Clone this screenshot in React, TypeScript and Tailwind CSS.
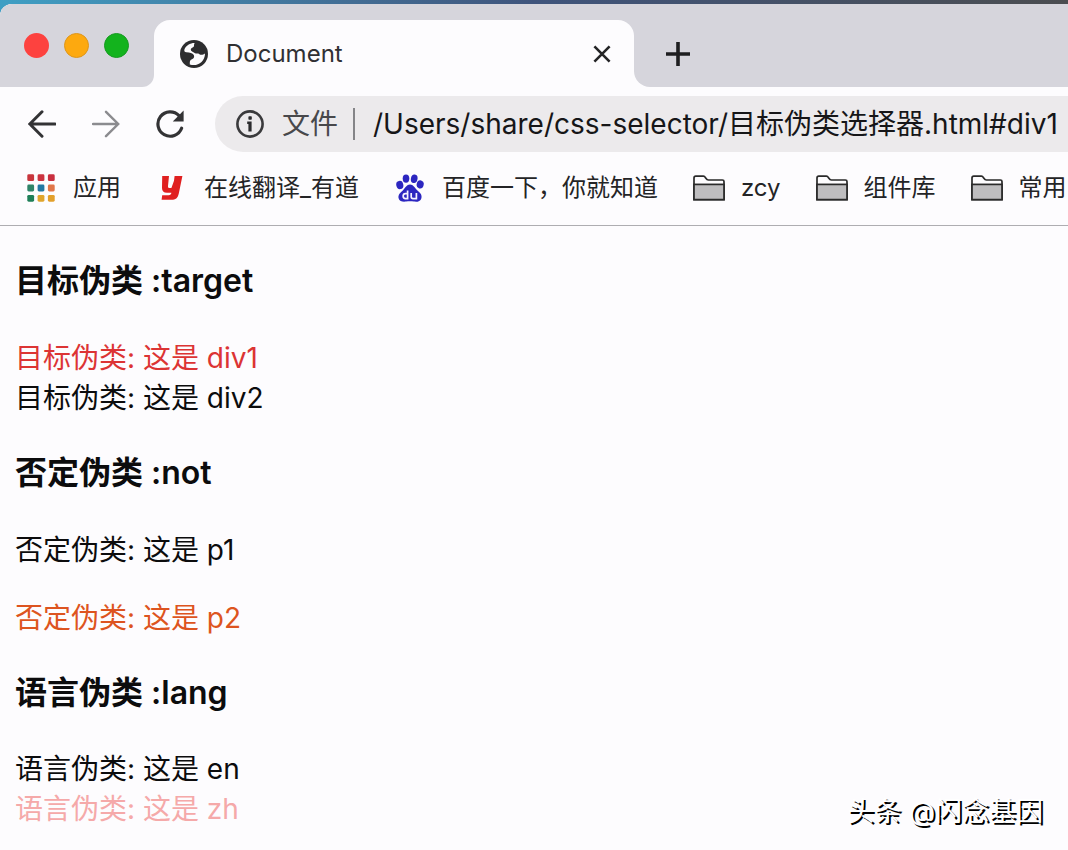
import React from "react";

function GlobeIcon() {
  return (
    <svg viewBox="0 0 28 28" className="size-7 shrink-0" aria-hidden="true">
      <circle cx="14" cy="14" r="14" fill="#2d2d2f" />
      <path
        d="M14.6 3C10 3 6 5.6 4.4 9.4C4 11 4.6 12 6.4 12.2C10 12.4 12.6 13 13.8 15C14.6 16.8 14 18.6 12 19.2C10.4 19.7 9.8 21 9.8 22.4L9.8 24.4C17 27 25 22 25 13.4C23.4 14.6 21 15.2 19.4 14.2C17.6 13 16.6 14 15 13.2C12.8 12 10.8 11.6 10.8 9.6C10.8 7.6 13.8 7.6 14 6C14 5 14 4 14.6 3Z"
        fill="#fdfcfe"
      />
    </svg>
  );
}

function BackIcon() {
  return (
    <svg viewBox="0 0 28 28" className="size-7" fill="none" stroke="#333335" strokeWidth="3" strokeLinecap="round" aria-hidden="true">
      <path d="M27 14H2M14 1.8L1.8 14L14 26.2" />
    </svg>
  );
}

function ForwardIcon() {
  return (
    <svg viewBox="0 0 28 28" className="size-7" fill="none" stroke="#8b8b8f" strokeWidth="2.4" strokeLinecap="round" aria-hidden="true">
      <path d="M1 14H26M14 1.8L26.2 14L14 26.2" />
    </svg>
  );
}

function ReloadIcon() {
  return (
    <svg viewBox="0 0 28 28" className="size-7" fill="none" aria-hidden="true">
      <path d="M25.6 18.2A12.2 12.2 0 1 1 23 5.6" stroke="#333335" strokeWidth="3.2" strokeLinecap="round" />
      <path d="M27.6 0.6V11.4H16.8Z" fill="#333335" />
    </svg>
  );
}

function InfoIcon() {
  return (
    <svg viewBox="0 0 28 28" className="size-7" fill="none" aria-hidden="true">
      <circle cx="14" cy="14" r="12.6" stroke="#3a3a3c" strokeWidth="2.6" />
      <rect x="12.4" y="6.2" width="3.4" height="3.6" rx="0.8" fill="#2b2b2d" />
      <path d="M11.2 11.6H15.6V21.6H12.4V14H11.2Z" fill="#2b2b2d" />
    </svg>
  );
}

function AppsIcon() {
  const dots = ["#c8353c", "#cc3340", "#c92f3f", "#2f8468", "#2378a3", "#e0764a", "#1f7f58", "#e0a52c", "#e2a02c"];
  return (
    <svg viewBox="0 0 28 28" className="size-7" aria-hidden="true">
      {dots.map((fill, i) => (
        <rect key={i} x={(i % 3) * 10.3 + 0.3} y={Math.floor(i / 3) * 10.3 + 0.3} width="6.8" height="6.8" rx="1.4" fill={fill} />
      ))}
    </svg>
  );
}

function YoudaoIcon() {
  return (
    <svg viewBox="0 0 28 28" className="size-7" aria-hidden="true">
      <path
        d="M4.2 2H11L10 12C9.9 13.4 10.4 14 11.6 14H13.4L16 6.8L16.6 2H24.4L20.8 19.4C19.8 24 17.6 25.8 13.4 25.8H3.6L4.2 21.2H10.6C12.4 21.2 13.2 20.4 13.4 18.8H9C5.6 18.8 4 17.2 4 14Z"
        fill="#e02020"
      />
    </svg>
  );
}

function PawIcon() {
  return (
    <svg viewBox="0 0 28 28" className="size-7" aria-hidden="true">
      <g fill="#2c26c0">
        <ellipse cx="3.8" cy="11" rx="3.5" ry="4.2" transform="rotate(-12 3.8 11)" />
        <ellipse cx="10" cy="4.6" rx="3.3" ry="4.2" />
        <ellipse cx="18.2" cy="4.8" rx="3.3" ry="4.3" transform="rotate(10 18.2 4.8)" />
        <ellipse cx="24.2" cy="10.4" rx="3.5" ry="4.1" transform="rotate(14 24.2 10.4)" />
        <path d="M14 10.6C17.4 10.6 18.6 14 21.2 16.2C24 18.6 26.4 20.8 25.4 24.2C24.4 27.8 20.8 28 18 27.6C15.2 27.2 12.8 27.2 10 27.6C7 28 3.4 27.6 2.6 24.2C1.8 20.8 4.4 18.6 7 16.2C9.4 14 10.6 10.6 14 10.6Z" />
      </g>
      <g fill="none" stroke="#f4f2ff" strokeWidth="1.7">
        <path d="M11.6 16.4V24.6H9.4C6.4 24.6 6.4 19.6 9.4 19.6H11.6" />
        <path d="M15.2 19V22.8C15.2 24 15.8 24.6 17 24.6H20.4V19" />
      </g>
    </svg>
  );
}

function FolderIcon() {
  return (
    <svg viewBox="0 0 32 26" className="h-[26px] w-8" aria-hidden="true">
      <path d="M1 24.6V3C1 1.8 1.6 1.2 2.8 1.2H10.4C12.8 1.2 12.6 5 15.4 5H29.4C30.4 5 31 5.6 31 6.6V24.6Z" fill="#fdfcfe" stroke="#2a2a2a" strokeWidth="1.7" />
      <rect x="1" y="9.4" width="30" height="15.2" fill="#bebdbf" stroke="#2a2a2a" strokeWidth="1.7" />
    </svg>
  );
}

const bookmarks = [
  { label: "应用", icon: <AppsIcon /> },
  { label: "在线翻译_有道", icon: <YoudaoIcon /> },
  { label: "百度一下，你就知道", icon: <PawIcon /> },
  { label: "zcy", icon: <FolderIcon /> },
  { label: "组件库", icon: <FolderIcon /> },
  { label: "常用", icon: <FolderIcon /> },
];

function TabStrip() {
  return (
    <div className="flex h-[83px] items-end rounded-tl-xl bg-[#d6d5dc]">
      <div className="flex h-full w-[154px] shrink-0 rounded-tl-xl bg-[#fdfcfe]">
        <div className="flex grow items-center gap-[15px] rounded-tl-xl rounded-br-xl bg-[#d6d5dc] pl-6">
          <button aria-label="关闭窗口" className="size-[25px] rounded-full bg-[#fd423f]" />
          <button aria-label="最小化" className="size-[25px] rounded-full border border-[#dd961c] bg-[#fda90f]" />
          <button aria-label="全屏" className="size-[25px] rounded-full border border-[#179a22] bg-[#13b31d]" />
        </div>
      </div>
      <div className="flex h-full w-[480px] shrink-0 items-end bg-[#d6d5dc]">
        <div className="flex h-[67px] w-full items-center rounded-t-2xl bg-[#fdfcfe] pr-[23px] pl-[26px]">
          <GlobeIcon />
          <span className="ml-[18px] grow text-2xl text-[#303033]">Document</span>
          <button aria-label="关闭标签页" className="p-0">
            <svg viewBox="0 0 18 18" className="size-[18px]" fill="none" stroke="#242426" strokeWidth="2.6" aria-hidden="true">
              <path d="M1.4 1.4L16.6 16.6M16.6 1.4L1.4 16.6" />
            </svg>
          </button>
        </div>
      </div>
      <div className="h-full grow bg-[#fdfcfe]">
        <div className="flex h-full items-center rounded-bl-2xl bg-[#d6d5dc] pt-4 pl-8">
          <button aria-label="新标签页">
            <svg viewBox="0 0 24 24" className="size-6" fill="none" stroke="#1e1e20" strokeWidth="3.6" aria-hidden="true">
              <path d="M12 0V24M0 12H24" />
            </svg>
          </button>
        </div>
      </div>
    </div>
  );
}

function Toolbar() {
  return (
    <div className="flex h-[73px] items-center pl-7">
      <div className="flex shrink-0 items-center gap-9">
        <button aria-label="后退"><BackIcon /></button>
        <button aria-label="前进"><ForwardIcon /></button>
        <button aria-label="重新加载"><ReloadIcon /></button>
      </div>
      <div className="ml-[31px] flex h-14 min-w-0 grow items-center rounded-l-full bg-[#eceaec] pl-[21px] text-[28px]">
        <InfoIcon />
        <span className="ml-[18px] shrink-0 text-[#48484b]">文件</span>
        <span className="ml-[15px] h-8 w-0.5 shrink-0 bg-[#858588]" />
        <input
          aria-label="地址"
          defaultValue="/Users/share/css-selector/目标伪类选择器.html#div1"
          className="ml-[18px] min-w-0 grow bg-transparent text-[#161618] outline-none"
        />
      </div>
    </div>
  );
}

function BookmarksBar() {
  return (
    <nav aria-label="书签栏" className="flex h-[66px] items-start gap-[35px] overflow-hidden border-b border-[#aeadb1] pt-2.5 pl-[25px]">
      {bookmarks.map((b) => (
        <a key={b.label} href="#" className="flex h-9 shrink-0 items-center gap-4 text-2xl text-[#242426]">
          <span className="flex w-8 justify-center">{b.icon}</span>
          {b.label}
        </a>
      ))}
    </nav>
  );
}

export default function App() {
  return (
    <div className="relative flex min-h-screen flex-col overflow-hidden bg-[#fdfcfe] font-[Inter,'Noto_Sans_CJK_SC',sans-serif]">
      <div className="bg-linear-to-r from-[#3f9fc4] via-[#3f547c] to-[#4b4d50]">
        <div className="h-1" />
        <TabStrip />
      </div>
      <Toolbar />
      <BookmarksBar />
      <main className="px-[15px] pt-[35px] text-[28px] leading-10 text-[#0c0c0d]">
        <h3 className="mb-[37px] text-[32px] font-semibold">目标伪类 :target</h3>
        <div className="text-[#dc3434]">目标伪类: 这是 div1</div>
        <div>目标伪类: 这是 div2</div>
        <h3 className="mt-[35px] mb-[37px] text-[32px] font-semibold">否定伪类 :not</h3>
        <p className="mb-7">否定伪类: 这是 p1</p>
        <p className="text-[#dd5420]">否定伪类: 这是 p2</p>
        <h3 className="mt-[35px] mb-9 text-[32px] font-semibold">语言伪类 :lang</h3>
        <div>语言伪类: 这是 en</div>
        <div className="text-[#f5a9a9]">语言伪类: 这是 zh</div>
      </main>
      <div className="absolute right-[25px] bottom-[18px] text-[27px] leading-10 text-white [text-shadow:2px_2px_0_#000]">头条 @闪念基因</div>
    </div>
  );
}
